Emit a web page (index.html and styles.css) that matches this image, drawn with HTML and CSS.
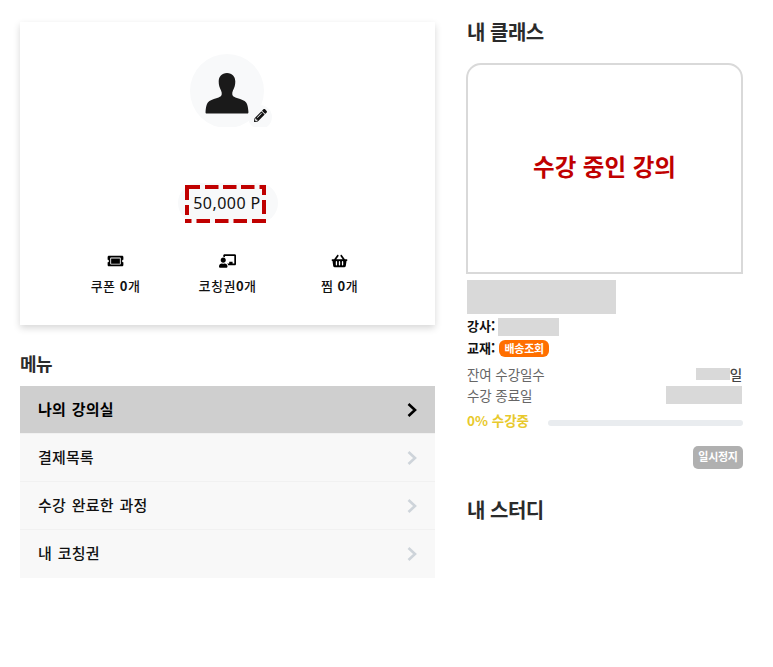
FILE: index.html
```html
<!DOCTYPE html>
<html lang="ko">
<head>
<meta charset="utf-8">
<title>마이페이지</title>
<link rel="stylesheet" href="styles.css">
</head>
<body>
<div class="page">
  <div class="left">
    <section class="card">
      <div class="avatar-wrap">
        <div class="avatar">
          <svg class="person" viewBox="0 0 44 42"><path d="M22 0c5.400 0 8.500 3.600 8.500 8.800 0 1.900-.2 3.300-.6 4.700-.5 1.800-1.200 3.100-1.800 4.300-.6 1.300-.9 2.600-.7 4 .2 1.600 1.200 2.500 3.200 3.300 3 1.200 6.800 1.800 9.400 3.600 2.400 1.600 3.600 5 4 11.400 0 .9-.3 1.400-1.300 1.400H1.300C.300 41.500 0 41 0 40.100c.4-6.400 1.600-9.800 4-11.400 2.600-1.800 6.400-2.400 9.400-3.600 2-.8 3-1.700 3.200-3.300.2-1.400-.1-2.700-.7-4-.6-1.200-1.300-2.500-1.800-4.300-.4-1.400-.6-2.800-.6-4.700C13.500 3.600 16.600 0 22 0z" fill="#1a1a1a"/></svg>
          <span class="edit">
            <svg viewBox="0 0 512 512"><path fill="#111" d="M497.900 142.100l-46.100 46.100c-4.700 4.700-12.300 4.700-17 0l-111-111c-4.700-4.700-4.700-12.300 0-17l46.100-46.100c18.700-18.700 49.100-18.700 67.900 0l60.100 60.100c18.800 18.700 18.800 49.100 0 67.900zM284.200 99.800L21.600 362.400.4 483.900c-2.900 16.400 11.400 30.600 27.800 27.800l121.500-21.300 262.600-262.600c4.700-4.700 4.700-12.300 0-17l-111-111c-4.800-4.700-12.400-4.700-17.100 0zM124.100 339.900c-5.500-5.500-5.500-14.300 0-19.800l154-154c5.500-5.500 14.300-5.500 19.800 0s5.500 14.300 0 19.800l-154 154c-5.500 5.500-14.300 5.500-19.800 0zM88 424h48v36.300l-64.500 11.300-31.100-31.100L51.700 376H88v48z"/></svg>
          </span>
        </div>
      </div>
      <div class="point">
        <span class="point-text">50,000 P</span>
        <svg class="point-mark" viewBox="0 0 81 38">
          <path class="dash dash-top" d="M0 2H81"/>
          <path class="dash dash-bottom" d="M0 36H81"/>
          <path class="dash dash-left" d="M2 0V38"/>
          <path class="dash dash-right" d="M79 0V38"/>
        </svg>
      </div>
      <div class="stats">
        <div class="stat">
          <svg class="stat-icon" viewBox="0 0 576 512"><path d="M128 160h320v192H128V160zm400 96c0 26.510 21.490 48 48 48v96c0 26.510-21.490 48-48 48H48c-26.510 0-48-21.490-48-48v-96c26.510 0 48-21.490 48-48s-21.490-48-48-48v-96c0-26.510 21.490-48 48-48h480c26.510 0 48 21.490 48 48v96c-26.510 0-48 21.490-48 48zm-48-104c0-13.255-10.745-24-24-24H120c-13.255 0-24 10.745-24 24v208c0 13.255 10.745 24 24 24h336c13.255 0 24-10.745 24-24V152z"/></svg>
          <span>쿠폰 <b>0</b>개</span>
        </div>
        <div class="stat">
          <svg class="stat-icon" viewBox="0 0 640 512"><path d="M208 352c-2.390 0-4.780.35-7.060 1.090C187.980 357.300 174.350 360 160 360c-14.350 0-27.980-2.700-40.950-6.910-2.280-.74-4.660-1.090-7.050-1.090C49.940 352-.33 402.490 0 464.620.14 490.880 21.730 512 48 512h224c26.270 0 47.860-21.120 48-47.380.33-62.130-49.940-112.620-112-112.620zm-48-32c53.020 0 96-42.980 96-96s-42.980-96-96-96-96 42.980-96 96 42.980 96 96 96zM592 0H208c-26.470 0-48 22.250-48 49.590V96c23.420 0 45.100 6.780 64 17.800V64h352v288h-64v-64H384v64h-76.240c19.100 16.690 33.120 38.730 39.690 64H592c26.470 0 48-22.250 48-49.590V49.590C640 22.250 618.470 0 592 0z"/></svg>
          <span>코칭권<b>0</b>개</span>
        </div>
        <div class="stat">
          <svg class="stat-icon" viewBox="0 0 576 512"><path d="M576 216v16c0 13.255-10.745 24-24 24h-8l-26.113 182.788C514.509 462.435 494.257 480 470.370 480H105.630c-23.887 0-44.139-17.565-47.518-41.212L32 256h-8c-13.255 0-24-10.745-24-24v-16c0-13.255 10.745-24 24-24h67.341l106.780-146.821c10.395-14.292 30.407-17.453 44.701-7.058 14.293 10.395 17.453 30.408 7.058 44.701L170.477 192h235.046L326.120 82.821c-10.395-14.292-7.234-34.306 7.059-44.701 14.291-10.395 34.306-7.235 44.701 7.058L484.659 192H552c13.255 0 24 10.745 24 24zM312 392V280c0-13.255-10.745-24-24-24s-24 10.745-24 24v112c0 13.255 10.745 24 24 24s24-10.745 24-24zm112 0V280c0-13.255-10.745-24-24-24s-24 10.745-24 24v112c0 13.255 10.745 24 24 24s24-10.745 24-24zm-224 0V280c0-13.255-10.745-24-24-24s-24 10.745-24 24v112c0 13.255 10.745 24 24 24s24-10.745 24-24z"/></svg>
          <span>찜 <b>0</b>개</span>
        </div>
      </div>
    </section>
    <h2 class="title menu-title">메뉴</h2>
    <nav class="menu">
      <a class="menu-item active"><span>나의 강의실</span><svg class="chev" viewBox="0 0 10 14"><path d="M1.500 1L8 7 1.500 13" fill="none" stroke="currentColor" stroke-width="2.600"/></svg></a>
      <a class="menu-item"><span>결제목록</span><svg class="chev" viewBox="0 0 10 14"><path d="M1.500 1L8 7 1.500 13" fill="none" stroke="currentColor" stroke-width="2.600"/></svg></a>
      <a class="menu-item"><span>수강 완료한 과정</span><svg class="chev" viewBox="0 0 10 14"><path d="M1.500 1L8 7 1.500 13" fill="none" stroke="currentColor" stroke-width="2.600"/></svg></a>
      <a class="menu-item"><span>내 코칭권</span><svg class="chev" viewBox="0 0 10 14"><path d="M1.500 1L8 7 1.500 13" fill="none" stroke="currentColor" stroke-width="2.600"/></svg></a>
    </nav>
  </div>
  <div class="right">
    <h2 class="title class-title">내 클래스</h2>
    <div class="thumb">수강 중인 강의</div>
    <div class="mask-title"></div>
    <div class="line teacher"><b>강사:</b><span class="mask mask-teacher"></span></div>
    <div class="line book"><b>교재:</b><span class="badge">배송조회</span></div>
    <div class="info first"><span>잔여 수강일수</span><span class="val"><i class="mask mask-days"></i>일</span></div>
    <div class="info"><span>수강 종료일</span><i class="mask mask-end"></i></div>
    <div class="progress"><b>0% 수강중</b><span class="bar"></span></div>
    <div class="actions"><span class="pause">일시정지</span></div>
    <h2 class="title study-title">내 스터디</h2>
  </div>
</div>
</body>
</html>
```
FILE: styles.css
```css
* { box-sizing: border-box; }
html, body { margin: 0; padding: 0; background: #fff; }
body {
  font-family: "Noto Sans CJK KR", "Noto Sans", sans-serif;
  color: #212529;
  width: 773px;
  height: 667px;
  overflow: hidden;
}
.page {
  display: flex;
  gap: 32px;
  padding: 0 30px 0 20px;
}
.left { width: 415px; padding-top: 22px; flex: none; }
.right { width: 276px; flex: none; }
.card {
  height: 303px;
  background: #fff;
  box-shadow: 0 3px 7px rgba(0, 0, 0, .16);
  padding-top: 32px;
  display: flex;
  flex-direction: column;
  align-items: center;
}
.avatar-wrap {
  height: 73px;
  overflow: hidden;
  width: 100px;
  display: flex;
  justify-content: center;
  padding-right: 1px;
}
.avatar {
  width: 74px;
  height: 74px;
  border-radius: 50%;
  background: #f8f9fa;
  position: relative;
  display: flex;
  justify-content: center;
  padding-top: 19px;
  flex: none;
}
.person { width: 44px; height: 41px; }
.edit {
  position: absolute;
  right: -8px;
  bottom: -1px;
  width: 24px;
  height: 24px;
  border-radius: 50%;
  background: #f8f9fa;
  display: flex;
  align-items: center;
  justify-content: center;
}
.edit svg { width: 13px; height: 13px; margin-top: -3px; }
.point {
  margin-top: 56px;
  width: 100px;
  height: 40px;
  border-radius: 20px;
  background: #f8f9fa;
  position: relative;
  display: flex;
  align-items: center;
  justify-content: center;
  flex: none;
}
.point-text {
  font-size: 16px;
  font-family: "Noto Sans", sans-serif;
  color: #111;
  line-height: 1;
  letter-spacing: .45px;
  margin-right: 1px;
}
.point-mark {
  position: absolute;
  left: 7.500px;
  top: 2px;
  width: 81px;
  height: 38px;
}
.dash { fill: none; stroke: #c00000; stroke-width: 4; }
.dash-top { stroke-dasharray: 15 5 13.500 4.500 13.500 4.500 13.500 5 13.500; }
.dash-bottom { stroke-dasharray: 6.500 5 13.500 5 13.500 5 13.500 5 14.500; }
.dash-left { stroke-dasharray: 15 5 10 4 4; }
.dash-right { stroke-dasharray: 10 5 14 5 4; }
.stats {
  display: grid;
  grid-template-columns: repeat(3, 112px);
  margin-top: 30px;
  justify-content: center;
}
.stat {
  display: flex;
  flex-direction: column;
  align-items: center;
  font-size: 13px;
  font-weight: 500;
  color: #111;
  line-height: 20px;
  letter-spacing: .5px;
  padding-top: 1px;
}
.stat b { font-weight: 700; }
.stat-icon { width: 17px; height: 14px; margin-bottom: 8px; }
.title { margin: 0; font-weight: 700; font-size: 20px; line-height: 28px; color: #2b2b2b; letter-spacing: -.5px; }
.menu-title { margin: 24px 0 0; font-size: 18px; }
.menu { margin-top: 9px; display: flex; flex-direction: column; }
.menu-item {
  height: 48px;
  background: #f8f8f8;
  border-bottom: 1px solid #f1f1f1;
  display: flex;
  align-items: center;
  justify-content: space-between;
  padding: 0 18px;
  font-size: 15px;
  font-weight: 500;
  color: #111;
  word-spacing: 1.500px;
  letter-spacing: .15px;
}
.menu-item span { margin-top: -3px; }
.menu-item:last-child { border-bottom: 0; }
.menu-item.active { background: #cfcfcf; font-weight: 700; color: #000; }
.chev { width: 10px; height: 14px; color: #ced4da; flex: none; }
.active .chev { color: #000; }
.class-title { margin-top: 18px; }
.thumb {
  margin-top: 17px;
  width: 277px;
  margin-left: -1px;
  height: 211px;
  border: 2px solid #d9d9d9;
  border-radius: 15px 15px 0 0;
  display: flex;
  align-items: center;
  justify-content: center;
  color: #c00000;
  font-size: 23.500px;
  font-weight: 700;
  padding-bottom: 6px;
}
.mask { background: #d9d9d9; display: block; }
.mask-title { margin-top: 6px; background: #d9d9d9; width: 149px; height: 34px; }
.line { display: flex; align-items: center; font-size: 13px; color: #111; }
.line b { font-weight: 700; margin-top: -2px; }
.teacher b { margin-top: -4px; }
.teacher { margin-top: 4px; height: 18px; gap: 3px; }
.mask-teacher { width: 61px; height: 18px; }
.book { margin-top: 3px; height: 18px; gap: 4px; }
.badge {
  background: #ff6f00;
  color: #fff;
  font-size: 11px;
  font-weight: 700;
  border-radius: 6px;
  width: 50px;
  height: 17px;
  line-height: 16px;
  text-align: center;
  letter-spacing: -.3px;
}
.info {
  display: flex;
  justify-content: space-between;
  align-items: center;
  font-size: 13.500px;
  color: #666;
  height: 18px;
  margin-top: 3px;
  letter-spacing: -.1px;
}
.info.first { margin-top: 8px; }
.val { display: flex; align-items: center; font-weight: 500; color: #444; margin-right: 1px; }
.mask-days { width: 34px; height: 12px; }
.mask-end { width: 76px; height: 18px; margin-right: 1px; }
.progress { display: flex; align-items: center; justify-content: space-between; margin-top: 7px; height: 18px; }
.progress b { color: #e8c92c; font-size: 13.500px; font-weight: 700; margin-top: -1px; }
.bar { width: 195px; height: 6px; border-radius: 3px; background: #e9ecef; margin-top: 6px; }
.actions { display: flex; justify-content: flex-end; margin-top: 17px; }
.pause {
  width: 50px;
  height: 23px;
  border-radius: 5px;
  background: #b0b0b0;
  color: #fff;
  font-size: 11px;
  font-weight: 700;
  text-align: center;
  line-height: 20px;
  letter-spacing: -.3px;
}
.study-title { margin-top: 27px; }
```
